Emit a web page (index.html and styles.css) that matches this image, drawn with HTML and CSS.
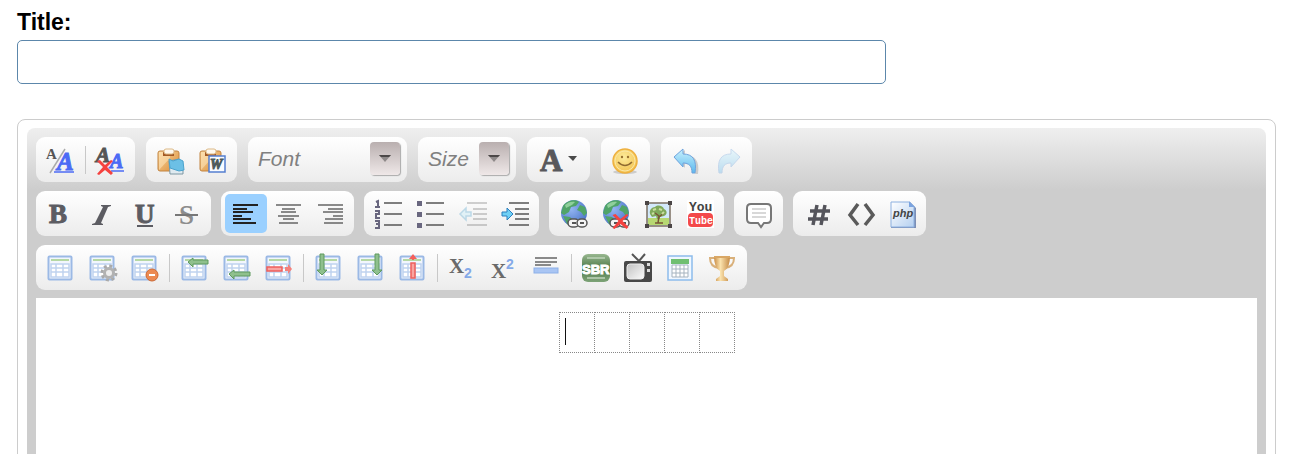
FILE: index.html
```html
<!DOCTYPE html>
<html lang="en">
<head>
    <meta charset="UTF-8">
    <meta name="viewport" content="width=device-width, initial-scale=1.0">
    <title>New Post</title>
    <link rel="stylesheet" href="styles.css">
</head>
<body>
    <!-- shared icon parts -->
    <svg class="defs" width="0" height="0" aria-hidden="true">
        <defs>
            <linearGradient id="g-clip" x1="0" y1="0" x2="1" y2="1"><stop offset="0" stop-color="#fbd9a0"/><stop offset="1" stop-color="#d98a35"/></linearGradient>
            <linearGradient id="g-undo" x1="0" y1="0" x2="0" y2="1"><stop offset="0" stop-color="#c9f1fd"/><stop offset="1" stop-color="#5cb9ee"/></linearGradient>
            <radialGradient id="g-globe" cx=".4" cy=".35" r=".7"><stop offset="0" stop-color="#93b5f2"/><stop offset="1" stop-color="#4a74c8"/></radialGradient>
            <radialGradient id="g-smile" cx=".45" cy=".35" r=".7"><stop offset="0" stop-color="#fdeb9a"/><stop offset="1" stop-color="#f2c04c"/></radialGradient>
            <linearGradient id="g-sbr" x1="0" y1="0" x2="0" y2="1"><stop offset="0" stop-color="#98b78f"/><stop offset=".5" stop-color="#4f7b4b"/><stop offset="1" stop-color="#7da377"/></linearGradient>
            <linearGradient id="g-cup" x1="0" y1="0" x2="1" y2="0"><stop offset="0" stop-color="#c98c45"/><stop offset=".4" stop-color="#fbe3ae"/><stop offset="1" stop-color="#c58a45"/></linearGradient>
            <linearGradient id="g-doc" x1="0" y1="0" x2="1" y2="1"><stop offset="0" stop-color="#ffffff"/><stop offset="1" stop-color="#b5d0f0"/></linearGradient>
            <linearGradient id="g-screen" x1="0" y1="0" x2="1" y2="1"><stop offset="0" stop-color="#c2c2c2"/><stop offset="1" stop-color="#fbfbfb"/></linearGradient>
        </defs>
        <symbol id="clipboard" viewBox="0 0 28 28">
            <rect x="1" y="5" width="21" height="20" rx="2" fill="url(#g-clip)" stroke="#c28440"/>
            <path d="M2 24L13 12V6H2z" fill="#fde3b5" opacity=".6"/>
            <path d="M6 10V6h11v4z" fill="#a45a24"/>
            <rect x="7" y="3" width="10" height="5" rx="2" fill="#fff9ee" stroke="#dcb987"/>
        </symbol>
        <symbol id="grid" viewBox="0 0 28 28">
            <rect x="1.5" y="2.5" width="23" height="23" rx="1" fill="#f2f6fd" stroke="#9bb9e5" stroke-width="2"/>
            <path d="M4 6h18" stroke="#b5d8a4" stroke-width="2"/>
            <path d="M4 10h18v13H4zM4 14h18M4 18h18M9 10v13M16 10v13" fill="#fff" stroke="#c0d3ef" stroke-width="1.5"/>
        </symbol>
        <symbol id="globe" viewBox="0 0 28 28">
            <circle cx="14" cy="13" r="13" fill="url(#g-globe)"/>
            <path d="M3 6C7 0 16-1 19 2l-3 4-5 1-2 5-5 3-3-2zM20 5l5 2 2 6-3 3-3-4-4-2zM3 16l7 1 5 5-3 4-5-2z" fill="#50a468"/>
            <path d="M5 5c3-3 7-4 10-3l-3 3-6 3z" fill="#8fcf9b"/>
            <g fill="#f4f4f4" stroke="#555" stroke-width="1.5">
                <rect x="8" y="19" width="11" height="8" rx="4"/>
                <rect x="17" y="19" width="10" height="8" rx="4"/>
                <path d="M12 23h4M20 23h4" stroke-width="2"/>
            </g>
        </symbol>
        <symbol id="lines" viewBox="0 0 28 28">
            <path d="M8 3h21M14 9h15M14 14h15M14 19h15M8 25h21" fill="none" stroke="#555" stroke-width="1.5"/>
        </symbol>
        <symbol id="cross" viewBox="0 0 18 16">
            <path d="M1 2l3-1 5 5 6-5 2 1-6 6 6 6-2 2-6-5-6 5-2-1 6-7z" fill="#f5423f"/>
        </symbol>
        <symbol id="arrow" viewBox="0 0 14 8">
            <path d="M1 0h12L7 7z" fill="#8f8a8a"/>
            <path d="M1 0h12l-2 2H3z" fill="#4c4848"/>
        </symbol>
    </svg>

    <form class="post-form">
        <label class="title-label" for="title">Title:</label>
        <input class="title-input" type="text" id="title" name="title">

        <div class="editor">
            <div class="editor-inner">
                <div class="toolbar">
                    <div class="toolbar-row">
                        <div class="group">
                            <button type="button" class="tool" aria-label="Styles">
                                <svg class="icon" viewBox="0 0 28 28"><text class="serif" x="-1" y="13" font-size="15" fill="#555">A</text><path d="M3 27L18 3" stroke="#aaa" stroke-width="1.5"/><text class="serif italic" x="10" y="24" font-size="25" fill="#4c6bf5" stroke="#4c6bf5">A</text><path d="M7 26h20" stroke="#4c6bf5" stroke-width="1.5"/></svg>
                            </button>
                            <span class="separator"></span>
                            <button type="button" class="tool" aria-label="Remove Format">
                                <svg class="icon" viewBox="0 0 28 28"><text class="serif italic" x="-1" y="16" font-size="21" fill="#555" stroke="#555">A</text><text class="serif italic" x="13" y="22" font-size="20" fill="#4c6bf5" stroke="#4c6bf5">A</text><path d="M14 25h13" stroke="#4c6bf5" stroke-width="1.5"/><use href="#cross" x="-1" y="13" width="18" height="16"/></svg>
                            </button>
                        </div>
                        <div class="group">
                            <button type="button" class="tool" aria-label="Paste">
                                <svg class="icon" viewBox="0 0 28 28"><use href="#clipboard"/><path d="M12 15l10-2 4 12v3H13z" fill="#dfeaf0" stroke="#7c97a3"/><path d="M12 13l4 2 6-2 4 2 1 9-5 1-9-3z" fill="#6cc0e6" stroke="#4ba3cd"/></svg>
                            </button>
                            <button type="button" class="tool" aria-label="Paste from Word">
                                <svg class="icon" viewBox="0 0 28 28"><use href="#clipboard"/><rect x="10" y="10" width="16" height="16" fill="#f8fbff" stroke="#557fd0" stroke-width="1.5"/><text class="serif italic" x="11" y="23" font-size="14" fill="#4d5b5b" stroke="#4d5b5b">W</text></svg>
                            </button>
                        </div>
                        <div class="group combo combo-font">
                            <select class="combo-select" aria-label="Font"><option>Font</option></select>
                            <span class="combo-arrow"><svg width="14" height="8"><use href="#arrow"/></svg></span>
                        </div>
                        <div class="group combo combo-size">
                            <select class="combo-select" aria-label="Size"><option>Size</option></select>
                            <span class="combo-arrow"><svg width="14" height="8"><use href="#arrow"/></svg></span>
                        </div>
                        <div class="group">
                            <button type="button" class="tool tool-wide" aria-label="Text Color">
                                <svg class="icon icon-wide" viewBox="0 0 42 28"><text class="serif" x="2" y="25" font-size="31" fill="#58585c" stroke="#58585c">A</text><path d="M30 10h9l-4 5z" fill="#4a4a4a"/></svg>
                            </button>
                        </div>
                        <div class="group">
                            <button type="button" class="tool" aria-label="Smiley">
                                <svg class="icon" viewBox="0 0 28 28"><ellipse cx="13" cy="26" rx="12" ry="2" fill="#ccc"/><circle cx="13" cy="15" r="12" fill="url(#g-smile)" stroke="#eeb03f" stroke-width="1.5"/><circle cx="13" cy="15" r="10" fill="none" stroke="#fbe7a6"/><circle cx="10" cy="11" r="1.2" fill="#9a7130"/><circle cx="16" cy="11" r="1.2" fill="#9a7130"/><path d="M6 16q7 7 14 0" fill="none" stroke="#8f6a30" stroke-width="1.5"/></svg>
                            </button>
                        </div>
                        <div class="group">
                            <button type="button" class="tool" aria-label="Undo">
                                <svg class="icon" viewBox="0 0 28 28"><path d="M4 12l9-8v5c10 0 15 6 13 19h-3c0-7-3-10-10-10v4z" fill="#ccc"/><path d="M2 11l9-8v5c10 0 14 6 12 19h-3c0-7-3-10-9-10v4z" fill="url(#g-undo)" stroke="#6fa3dd"/></svg>
                            </button>
                            <button type="button" class="tool" aria-label="Redo" disabled>
                                <svg class="icon faded" viewBox="0 0 28 28"><path d="M26 11l-9-8v5C7 8 3 14 5 27h3c0-7 3-10 9-10v4z" fill="url(#g-undo)" stroke="#6fa3dd"/></svg>
                            </button>
                        </div>
                    </div>

                    <div class="toolbar-row toolbar-row-tight">
                        <div class="group">
                            <button type="button" class="tool" aria-label="Bold">
                                <svg class="icon" viewBox="0 0 28 28"><text class="serif" x="2" y="23" font-size="27" fill="#5c5c62" stroke="#5c5c62">B</text></svg>
                            </button>
                            <button type="button" class="tool" aria-label="Italic">
                                <svg class="icon" viewBox="0 0 28 28"><path d="M12 5h10v1l-3 1-7 16 2 1v1H3v-1l3-1 8-16-2-1z" fill="#5c5c62"/></svg>
                            </button>
                            <button type="button" class="tool" aria-label="Underline">
                                <svg class="icon" viewBox="0 0 28 28"><text class="serif" x="4" y="23" font-size="27" fill="#5c5c62" stroke="#5c5c62">U</text><path d="M6 26h16" stroke="#5c5c62" stroke-width="2"/></svg>
                            </button>
                            <button type="button" class="tool" aria-label="Strike Through">
                                <svg class="icon" viewBox="0 0 28 28"><text class="serif" x="6" y="24" font-size="27" fill="#8d8d8d">S</text><path d="M2 15h23" stroke="#777" stroke-width="2"/></svg>
                            </button>
                        </div>
                        <div class="group">
                            <button type="button" class="tool active" aria-label="Align Left" aria-pressed="true">
                                <svg class="icon" viewBox="0 0 28 28"><path d="M1 5h25M1 9h14M1 12h20M1 16h9M1 19h18M1 23h23" stroke="#222" stroke-width="2"/></svg>
                            </button>
                            <button type="button" class="tool" aria-label="Center">
                                <svg class="icon" viewBox="0 0 28 28"><path d="M2 5h25M8 9h13M7 12h15M4 16h21M9 19h11M5 23h19" stroke="#666" stroke-width="1.5"/></svg>
                            </button>
                            <button type="button" class="tool" aria-label="Align Right">
                                <svg class="icon" viewBox="0 0 28 28"><path d="M2 5h25M12 9h15M7 12h20M17 16h10M9 19h18M8 23h19" stroke="#666" stroke-width="1.5"/></svg>
                            </button>
                        </div>
                        <div class="group">
                            <button type="button" class="tool" aria-label="Numbered List">
                                <svg class="icon" viewBox="0 0 28 28"><path d="M1 2l2-1v6M0 7h5M0 11h4v3H1v4h4M0 21h4v3H1h3v4H0" fill="none" stroke="#69677f" stroke-width="2"/><path d="M9 3h18M9 14h18M9 25h18" stroke="#555" stroke-width="1.5"/></svg>
                            </button>
                            <button type="button" class="tool" aria-label="Bulleted List">
                                <svg class="icon" viewBox="0 0 28 28"><path d="M0 1h5v5H0zM0 12h5v5H0zM0 23h5v5H0z" fill="#69677f"/><path d="M9 3h18M9 14h18M9 25h18" stroke="#555" stroke-width="1.5"/></svg>
                            </button>
                            <button type="button" class="tool" aria-label="Decrease Indent" disabled>
                                <svg class="icon faded" viewBox="0 0 28 28"><use href="#lines"/><path d="M1 14l6-6v4h5v4H7v4z" fill="#bdeafa" stroke="#53a5cf" stroke-width="1.5"/></svg>
                            </button>
                            <button type="button" class="tool" aria-label="Increase Indent">
                                <svg class="icon" viewBox="0 0 28 28"><use href="#lines"/><path d="M12 14L6 8v4H1v4h5v4z" fill="#6fd0f5" stroke="#2a7fbf"/></svg>
                            </button>
                        </div>
                        <div class="group">
                            <button type="button" class="tool" aria-label="Link">
                                <svg class="icon" viewBox="0 0 28 28"><use href="#globe"/></svg>
                            </button>
                            <button type="button" class="tool" aria-label="Unlink">
                                <svg class="icon" viewBox="0 0 28 28"><use href="#globe"/><use href="#cross" x="9" y="13" width="19" height="16"/></svg>
                            </button>
                            <button type="button" class="tool" aria-label="Image">
                                <svg class="icon" viewBox="0 0 28 28"><rect x="3" y="3" width="23" height="23" fill="#d3e9fb" stroke="#7b6f62" stroke-width="1.5"/><path d="M4 18h21v7H4z" fill="#b7d872"/><path d="M6 14c-1-4 2-7 5-7 3-3 8-1 9 2 4 2 3 6 0 7l-4 1v2h-3l-1-3-4 1z" fill="#7fa95a"/><path d="M14 23l1-7-4-3M15 17l5-4M11 23h8" fill="none" stroke="#785536" stroke-width="1.5"/><path d="M9 10l3-1M15 9l3 1M8 14l2-1M18 14l2-2" stroke="#c8dfa0" stroke-width="2"/><path d="M1 1h4v4H1zM24 1h4v4h-4zM1 24h4v4H1zM24 24h4v4h-4z" fill="#4b4646"/></svg>
                            </button>
                            <button type="button" class="tool" aria-label="YouTube">
                                <svg class="icon" viewBox="0 0 28 28"><path d="M1 0h27v28H1z" fill="#fff"/><text class="mono" x="3" y="11" font-size="13" fill="#444">You</text><rect x="2" y="13" width="25" height="14" rx="4" fill="#f4494a"/><text class="mono" x="3" y="24" font-size="10" fill="#fff">Tube</text></svg>
                            </button>
                        </div>
                        <div class="group">
                            <button type="button" class="tool" aria-label="Quote">
                                <svg class="icon" viewBox="0 0 28 28"><path d="M6 4h16q4 0 4 4v11q0 4-4 4h-3l-3 4-3-4H6q-4 0-4-4V8q0-4 4-4z" fill="#fff" stroke="#777" stroke-width="2"/><path d="M7 9h14M7 13h14M7 17h14" stroke="#ccc" stroke-width="1.5"/></svg>
                            </button>
                        </div>
                        <div class="group">
                            <button type="button" class="tool" aria-label="Code">
                                <svg class="icon" viewBox="0 0 28 28"><path d="M13 5L9 25M21 5l-4 20M6 11h20M4 19h20" stroke="#55555c" stroke-width="3.5"/></svg>
                            </button>
                            <button type="button" class="tool" aria-label="HTML">
                                <svg class="icon" viewBox="0 0 28 28"><path d="M12 4L4 15l8 10M19 4l8 11-8 10" fill="none" stroke="#5a5a5a" stroke-width="3.5"/></svg>
                            </button>
                            <button type="button" class="tool" aria-label="PHP">
                                <svg class="icon" viewBox="0 0 28 28"><path d="M3 2h19l6 6v20H3z" fill="#7d8fb5"/><path d="M3 2h18l5 5v20H3z" fill="url(#g-doc)" stroke="#8cb0e0"/><path d="M21 1v6h6z" fill="#7ba4e0"/><text class="sans italic" x="5" y="17" font-size="11" fill="#444">php</text></svg>
                            </button>
                        </div>
                    </div>

                    <div class="toolbar-row">
                        <div class="group">
                            <button type="button" class="tool" aria-label="Insert Table">
                                <svg class="icon" viewBox="0 0 28 28"><use href="#grid"/></svg>
                            </button>
                            <button type="button" class="tool" aria-label="Table Properties">
                                <svg class="icon" viewBox="0 0 28 28"><use href="#grid"/><circle cx="20" cy="19" r="7" fill="none" stroke="#aaa" stroke-width="3" stroke-dasharray="3 2.5"/><circle cx="20" cy="19" r="4.5" fill="#eee" stroke="#b2b2b2" stroke-width="3"/></svg>
                            </button>
                            <button type="button" class="tool" aria-label="Delete Table">
                                <svg class="icon" viewBox="0 0 28 28"><use href="#grid"/><circle cx="21" cy="21" r="6" fill="#ec8a52" stroke="#cf6a35"/><path d="M18 21h6" stroke="#fff" stroke-width="2"/></svg>
                            </button>
                            <span class="separator"></span>
                            <button type="button" class="tool" aria-label="Insert Row Before">
                                <svg class="icon" viewBox="0 0 28 28"><use href="#grid"/><path d="M7 8l5-4v2h15v4H12v3z" fill="#8fc08d" stroke="#5f9a5e"/></svg>
                            </button>
                            <button type="button" class="tool" aria-label="Insert Row After">
                                <svg class="icon" viewBox="0 0 28 28"><use href="#grid"/><path d="M6 20l5-4v2h16v4H11v3z" fill="#8fc08d" stroke="#5f9a5e"/></svg>
                            </button>
                            <button type="button" class="tool" aria-label="Delete Row">
                                <svg class="icon" viewBox="0 0 28 28"><use href="#grid"/><path d="M2 13h15v4H2z" fill="#f9a5a1" stroke="#ee5f5c" stroke-width="1.5"/><path d="M20 13h3v-3l4 5-4 5v-3h-3z" fill="#f4807b"/></svg>
                            </button>
                            <span class="separator"></span>
                            <button type="button" class="tool" aria-label="Insert Column Before">
                                <svg class="icon" viewBox="0 0 28 28"><use href="#grid"/><path d="M5 0h4v16h3l-5 5-5-5h3z" fill="#8fc08d" stroke="#5f9a5e"/></svg>
                            </button>
                            <button type="button" class="tool" aria-label="Insert Column After">
                                <svg class="icon" viewBox="0 0 28 28"><use href="#grid"/><path d="M18 0h4v16h3l-5 5-5-5h3z" fill="#8fc08d" stroke="#5f9a5e"/></svg>
                            </button>
                            <button type="button" class="tool" aria-label="Delete Column">
                                <svg class="icon" viewBox="0 0 28 28"><use href="#grid"/><path d="M12 9h4v15h-4z" fill="#f9a5a1" stroke="#ee5f5c" stroke-width="1.5"/><path d="M13 6V5h-3l4-5 4 5h-3v1z" fill="#f4605b"/></svg>
                            </button>
                            <span class="separator"></span>
                            <button type="button" class="tool" aria-label="Subscript">
                                <svg class="icon" viewBox="0 0 28 28"><text class="serif" x="0" y="19" font-size="21" fill="#6a6a6a">X</text><text class="sans" x="15" y="24" font-size="14" fill="#84a9e8">2</text></svg>
                            </button>
                            <button type="button" class="tool" aria-label="Superscript">
                                <svg class="icon" viewBox="0 0 28 28"><text class="serif" x="0" y="24" font-size="21" fill="#6a6a6a">X</text><text class="sans" x="15" y="15" font-size="14" fill="#84a9e8">2</text></svg>
                            </button>
                            <button type="button" class="tool" aria-label="Horizontal Line">
                                <svg class="icon" viewBox="0 0 28 28"><path d="M2 4h22M2 8h22M2 11h16" stroke="#666" stroke-width="1.5"/><rect x="1" y="14" width="24" height="5" fill="#a9c5f3" stroke="#8db0e8"/></svg>
                            </button>
                            <span class="separator"></span>
                            <button type="button" class="tool" aria-label="SBR">
                                <svg class="icon" viewBox="0 0 28 28"><rect x="-1" width="28" height="28" rx="6" fill="url(#g-sbr)"/><path d="M4 4h18M4 24h18" stroke="#bfd4b9" stroke-width="1.5"/><text class="sans" x="-1" y="20" font-size="13" fill="#fff" stroke="#fff">SBR</text></svg>
                            </button>
                            <button type="button" class="tool" aria-label="Video">
                                <svg class="icon" viewBox="0 0 28 28"><path d="M7 0l7 7 6-7" fill="none" stroke="#555" stroke-width="2"/><rect x="-1" y="7" width="28" height="21" rx="2" fill="#484848"/><rect x="2" y="10" width="17" height="15" rx="3" fill="url(#g-screen)" stroke="#eee"/><path d="M22 9h3v3h-3zM22 15h3v3h-3z" fill="#ddd"/></svg>
                            </button>
                            <button type="button" class="tool" aria-label="Spreadsheet">
                                <svg class="icon" viewBox="0 0 28 28"><rect x="1" y="2" width="24" height="24" fill="#f0f7ff" stroke="#8dbcec" stroke-width="1.5"/><rect x="4" y="5" width="18" height="5" fill="#6fbf70"/><path d="M5 11h16v12H5zM5 15h16M5 19h16M9 11v12M13 11v12M17 11v12" fill="#fff" stroke="#a5b3bf"/></svg>
                            </button>
                            <button type="button" class="tool" aria-label="Awards">
                                <svg class="icon" viewBox="0 0 28 28"><path d="M7 4H1q0 9 9 10M19 4h6q0 9-9 10" fill="none" stroke="#d9b07a" stroke-width="2"/><path d="M5 2h16q0 12-6 15v5l4 3v2H7v-2l4-3v-5Q5 14 5 2z" fill="url(#g-cup)"/><path d="M5 3h16" stroke="#d9a765" stroke-width="2"/></svg>
                            </button>
                        </div>
                    </div>
                </div>

                <div class="content">
                    <table class="content-table">
                        <tbody>
                            <tr><td><span class="caret"></span></td><td></td><td></td><td></td><td></td></tr>
                        </tbody>
                    </table>
                </div>
            </div>
        </div>
    </form>
</body>
</html>
```
FILE: styles.css
```css
body {
    font-family: "Liberation Sans", Arial, sans-serif;
    background: #fff;
    color: #000;
    margin: 0;
    height: 100vh;
    overflow: hidden;
}
.defs {
    position: absolute;
}
.post-form {
    padding: 8px 16px 0 17px;
}

/* title field */
.title-label {
    display: block;
    font-size: 23px;
    line-height: 28px;
    font-weight: bold;
    margin-bottom: 4px;
}
.title-input {
    display: block;
    box-sizing: border-box;
    width: 69%;
    height: 44px;
    padding: 0 8px;
    font: inherit;
    font-size: 21px;
    background: #fff;
    border: 1px solid #5c87ab;
    border-radius: 5px;
    outline: none;
}

/* editor frame */
.editor {
    margin-top: 35px;
    padding: 8px 9px;
    border: 1px solid #ccc;
    border-radius: 8px;
}
.editor-inner {
    padding: 9px;
    border-radius: 8px;
    background: #cdcdcd linear-gradient(#efefef, #cdcdcd) no-repeat top / 100% 62px;
}
.toolbar {
    display: flex;
    flex-direction: column;
    gap: 9px;
    margin-bottom: 8px;
}
.toolbar-row {
    display: flex;
    gap: 11px;
}
.toolbar-row-tight {
    gap: 10px;
}
.group {
    display: flex;
    align-items: center;
    box-sizing: border-box;
    height: 45px;
    padding: 3px 3px 3px 4px;
    border-radius: 9px;
    background: linear-gradient(#fff, #ececec);
}
.tool {
    display: flex;
    align-items: center;
    justify-content: center;
    width: 42px;
    height: 39px;
    padding: 0;
    border: none;
    border-radius: 5px;
    background: transparent;
    cursor: pointer;
}
.tool-wide {
    width: 56px;
}
.tool.active {
    background: #9ad0ff;
}
.icon {
    display: block;
    width: 28px;
    height: 28px;
    overflow: visible;
}
.icon-wide {
    width: 42px;
}
.faded {
    opacity: 0.35;
}
.serif {
    font-family: "Liberation Serif", serif;
    font-weight: bold;
}
.sans {
    font-family: "Liberation Sans", sans-serif;
    font-weight: bold;
}
.mono {
    font-family: "Liberation Mono", monospace;
    font-weight: bold;
}
.italic {
    font-style: italic;
}
.separator {
    width: 1px;
    height: 28px;
    margin: 0 4px 0 3px;
    background: #c8c8c8;
}

/* drop-downs */
.combo {
    position: relative;
    padding: 0;
}
.combo-font {
    width: 159px;
}
.combo-size {
    width: 98px;
}
.combo-select {
    width: 100%;
    height: 45px;
    padding: 0 0 2px 10px;
    border: none;
    appearance: none;
    background: transparent;
    color: #808080;
    font-family: "Liberation Sans", Arial, sans-serif;
    font-size: 21px;
    font-style: italic;
}
.combo-arrow {
    position: absolute;
    top: 5px;
    right: 7px;
    display: flex;
    align-items: center;
    justify-content: center;
    width: 30px;
    height: 33px;
    border-radius: 4px;
    background: linear-gradient(#b9afaf, #efe8e8);
    box-shadow: 1px 1px 1px #aaa;
    pointer-events: none;
}

/* editing area */
.content {
    min-height: 300px;
    padding-top: 14px;
    background: #fff;
}
.content-table {
    margin: 0 auto;
    border-collapse: collapse;
}
.content-table td {
    box-sizing: border-box;
    width: 35px;
    height: 40px;
    padding: 5px;
    border: 1px dotted #888;
    vertical-align: top;
}
.caret {
    display: block;
    width: 1px;
    height: 27px;
    background: #111;
}
```
